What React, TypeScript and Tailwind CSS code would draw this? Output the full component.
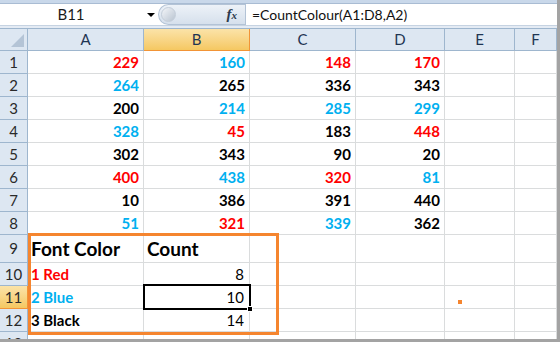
type Tone = "r" | "b" | "k";

const tone: Record<Tone, string> = {
  r: "text-[#ff0000]",
  b: "text-[#00b0f0]",
  k: "text-black",
};

const data: [string, Tone][][] = [
  [["229", "r"], ["160", "b"], ["148", "r"], ["170", "r"]],
  [["264", "b"], ["265", "k"], ["336", "k"], ["343", "k"]],
  [["200", "k"], ["214", "b"], ["285", "b"], ["299", "b"]],
  [["328", "b"], ["45", "r"], ["183", "k"], ["448", "r"]],
  [["302", "k"], ["343", "k"], ["90", "k"], ["20", "k"]],
  [["400", "r"], ["438", "b"], ["320", "r"], ["81", "b"]],
  [["10", "k"], ["386", "k"], ["391", "k"], ["440", "k"]],
  [["51", "b"], ["321", "r"], ["339", "b"], ["362", "k"]],
];

const summary: { label: string; t: Tone; count: string }[] = [
  { label: "1 Red", t: "r", count: "8" },
  { label: "2 Blue", t: "b", count: "10" },
  { label: "3 Black", t: "k", count: "14" },
];

const cols = ["A", "B", "C", "D", "E", "F"];

const cell = "border-r border-b border-[#dadcdd]";
const rowHead =
  "border-r border-b border-[#9eb6ce] bg-[#dde7f2] flex items-center justify-center text-[15px] text-[#2a2a2a]";

function RowHead({ n, active }: { n: number; active?: boolean }) {
  return (
    <div
      className={
        active
          ? "border-r border-b border-[#f29436] bg-gradient-to-b from-[#fbe3a8] to-[#f5c861] flex items-center justify-center text-[15px] text-[#2a2a2a]"
          : rowHead
      }
    >
      {n}
    </div>
  );
}

export default function App() {
  return (
    <div className="w-[560px] h-[342px] overflow-hidden bg-white border-r-[3px] border-b-[3px] border-[#a3a3a3] flex flex-col font-['Lato',sans-serif] text-black">
      {/* formula bar */}
      <div className="h-[4px] bg-[#c9d8ea] border-b border-[#a9bcd3]" />
      <div className="h-[21px] flex items-stretch">
        <div className="w-[158px] bg-white relative flex items-center">
          <span className="w-[142px] text-center text-[15px] text-[#1a1a1a]">B11</span>
          <span className="absolute left-[147px] top-[9px] w-0 h-0 border-l-[4px] border-r-[4px] border-t-[4px] border-l-transparent border-r-transparent border-t-black" />
        </div>
        <div className="w-[87px] flex items-center rounded-l-full bg-gradient-to-b from-[#edf2f8] to-[#d6e0ec] border border-[#b3c3d6] border-r-0">
          <span className="ml-[2px] w-[15px] h-[15px] rounded-full bg-gradient-to-br from-[#f4f6f9] to-[#b9c4d1] border border-[#c3cdd9]" />
          <span className="ml-auto mr-[8px] italic font-bold font-['Liberation_Serif',serif] text-[15px] text-[#2c3a4d] leading-none">
            f<span className="text-[11px]">x</span>
          </span>
        </div>
        <div className="flex-1 bg-white border-l border-[#b3c3d6] flex items-center pl-[6px] text-[14px] text-[#111]">
          =CountColour(A1:D8,A2)
        </div>
      </div>
      <div className="h-[3px] bg-[#e4ebf4] border-t border-[#c6d3e2]" />

      {/* sheet */}
      <div className="relative flex-1 overflow-hidden">
        <div className="grid grid-cols-[28px_116px_106px_106px_89px_70px_1fr] grid-rows-[22px_repeat(8,23px)_28px_repeat(4,23px)] border-t border-[#9eb6ce]">
          {/* header row */}
          <div className="border-r border-b border-[#9eb6ce] bg-[#dde7f2] flex items-end justify-end p-[3px]">
            <svg width="13" height="13" viewBox="0 0 13 13">
              <polygon points="13,0 13,13 0,13" fill="#b4c4d6" />
            </svg>
          </div>
          {cols.map((c) => (
            <div
              key={c}
              className={
                c === "B"
                  ? "border-r border-b border-[#f29436] bg-gradient-to-b from-[#fbe3a8] to-[#f5c861] flex items-center justify-center text-[15px] text-[#1f3552]"
                  : "border-r border-b border-[#9eb6ce] bg-[#dde7f2] flex items-center justify-center text-[15px] text-[#1f3552]"
              }
            >
              {c}
            </div>
          ))}

          {/* data rows */}
          {data.map((row, i) => (
            <div key={i} className="contents">
              <RowHead n={i + 1} />
              {row.map(([v, t], j) => (
                <div
                  key={j}
                  className={`${cell} flex items-center justify-end pr-[4px] text-[15px] font-bold ${tone[t]}`}
                >
                  {v}
                </div>
              ))}
              <div className={cell} />
              <div className={cell} />
            </div>
          ))}

          {/* header of summary */}
          <RowHead n={9} />
          <div className={`${cell} flex items-center pl-[3px] pt-[2px] text-[19px] font-bold`}>Font Color</div>
          <div className={`${cell} flex items-center pl-[3px] pt-[2px] text-[19px] font-bold`}>Count</div>
          <div className={cell} />
          <div className={cell} />
          <div className={cell} />
          <div className={cell} />

          {summary.map((s, i) => (
            <div key={s.label} className="contents">
              <RowHead n={10 + i} active={i === 1} />
              <div className={`${cell} flex items-center pl-[3px] text-[15px] font-bold ${tone[s.t]}`}>{s.label}</div>
              <div className={`${cell} flex items-center justify-end pr-[5px] text-[15px]`}>{s.count}</div>
              <div className={cell} />
              <div className={cell} />
              <div className={cell} />
              <div className={cell} />
            </div>
          ))}

          <RowHead n={13} />
          <div className={cell} />
          <div className={cell} />
          <div className={cell} />
          <div className={cell} />
          <div className={cell} />
          <div className={cell} />
        </div>

        {/* orange highlight around the summary table */}
        <div className="absolute left-[28px] top-[205px] w-[251px] h-[102px] border-[3px] border-[#f5852f] pointer-events-none" />
        {/* active cell B11 */}
        <div className="absolute left-[143px] top-[256px] w-[108px] h-[26px] border-2 border-black pointer-events-none">
          <span className="absolute right-[-4px] bottom-[-4px] w-[6px] h-[6px] bg-black border border-white" />
        </div>
        {/* stray mark */}
        <div className="absolute left-[458px] top-[272px] w-[4px] h-[4px] bg-[#f5852f]" />
      </div>
    </div>
  );
}
